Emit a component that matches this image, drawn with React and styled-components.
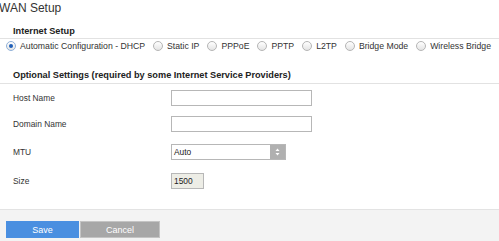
import React from "react";
import styled, { createGlobalStyle } from "styled-components";

const Global = createGlobalStyle`
  html, body {
    margin: 0;
    padding: 0;
    background: #fff;
  }
  body {
    font-family: "Liberation Sans", Arial, sans-serif;
    color: #333;
  }
`;

const Page = styled.div`
  width: 499px;
  height: 241px;
  display: flex;
  flex-direction: column;
  overflow: hidden;
`;

const Title = styled.h1`
  margin: 0 0 0 -1px;
  font-size: 12px;
  font-weight: normal;
  line-height: 17px;
  height: 16px;
  color: #333;
`;

const SectionHeader = styled.h2`
  margin: ${(p) => p.$top}px 0 0 0;
  padding: 0 0 ${(p) => p.$pad}px 13px;
  font-size: 9.2px;
  font-weight: bold;
  line-height: 12px;
  color: #222;
  border-bottom: 1px solid #e2e2e2;
`;

const RadioRow = styled.div`
  display: flex;
  align-items: center;
  height: 14px;
  padding-left: 6px;
  gap: 8px;
`;

const RadioItem = styled.label`
  display: flex;
  align-items: center;
  gap: 4px;
  font-size: 8.7px;
  white-space: nowrap;
  color: #333;
`;

const RadioDot = styled.span`
  box-sizing: border-box;
  width: 10px;
  height: 10px;
  border-radius: 50%;
  border: 1px solid ${(p) => (p.$on ? "#8fb0d8" : "#b5b5b5")};
  background: linear-gradient(#ffffff, #e4e4e4);
  display: flex;
  align-items: center;
  justify-content: center;

  &::after {
    content: "";
    width: 4px;
    height: 4px;
    border-radius: 50%;
    background: ${(p) => (p.$on ? "#1f5fb8" : "transparent")};
  }
`;

const Form = styled.div`
  display: flex;
  flex-direction: column;
  padding-left: 13px;
`;

const Row = styled.div`
  display: grid;
  grid-template-columns: 158px auto;
  align-items: center;
  height: 16px;
  margin-top: ${(p) => p.$top}px;
`;

const Label = styled.span`
  font-size: 8.4px;
  color: #333;
`;

const TextBox = styled.div`
  box-sizing: border-box;
  width: ${(p) => p.$w}px;
  height: 16px;
  border: 1px solid #b7b7b7;
  background: ${(p) => (p.$readonly ? "#ededE6" : "#fff")};
  font-size: 8.4px;
  line-height: 14px;
  padding-left: 2px;
  color: #222;
`;

const Select = styled.div`
  box-sizing: border-box;
  width: 115px;
  height: 16px;
  border: 1px solid #b7b7b7;
  display: flex;
  font-size: 8.4px;
  color: #222;
`;

const SelectValue = styled.span`
  flex: 1;
  line-height: 14px;
  padding-left: 2px;
`;

const Spinner = styled.span`
  width: 15px;
  background: #b0b0b0;
  display: flex;
  align-items: center;
  justify-content: center;
`;

const Footer = styled.div`
  margin-top: auto;
  height: 32px;
  border-top: 1px solid #e3e3e3;
  background: #f3f3f3;
  display: flex;
  align-items: flex-start;
  padding: 11px 0 0 6px;
  box-sizing: border-box;
  gap: 1px;
`;

const Button = styled.button`
  box-sizing: border-box;
  width: ${(p) => p.$w}px;
  height: 17px;
  margin: 0;
  padding: 0;
  font-family: "Liberation Sans", Arial, sans-serif;
  font-size: 9px;
  color: #fff;
  border: 1px solid ${(p) => (p.$primary ? "#4a90e2" : "#c4c4c4")};
  background: ${(p) => (p.$primary ? "#4a8fe0" : "#a7a7a7")};
  cursor: pointer;
`;

const modes = [
  "Automatic Configuration - DHCP",
  "Static IP",
  "PPPoE",
  "PPTP",
  "L2TP",
  "Bridge Mode",
  "Wireless Bridge",
];

export default function App() {
  return (
    <Page>
      <Global />
      <Title>WAN Setup</Title>
      <SectionHeader $top={9} $pad={1}>Internet Setup</SectionHeader>
      <RadioRow>
        {modes.map((m, i) => (
          <RadioItem key={m}>
            <RadioDot $on={i === 0} />
            {m}
          </RadioItem>
        ))}
      </RadioRow>
      <SectionHeader $top={16} $pad={2}>
        Optional Settings (required by some Internet Service Providers)
      </SectionHeader>
      <Form>
        <Row $top={6}>
          <Label>Host Name</Label>
          <TextBox $w={141} />
        </Row>
        <Row $top={10}>
          <Label>Domain Name</Label>
          <TextBox $w={141} />
        </Row>
        <Row $top={12}>
          <Label>MTU</Label>
          <Select>
            <SelectValue>Auto</SelectValue>
            <Spinner>
              <svg width="5" height="8" viewBox="0 0 5 8">
                <path d="M2.5 0.5 L4.5 3 L0.5 3 Z" fill="#fff" />
                <path d="M0.5 5 L4.5 5 L2.5 7.5 Z" fill="#fff" />
              </svg>
            </Spinner>
          </Select>
        </Row>
        <Row $top={13}>
          <Label>Size</Label>
          <TextBox $w={33} $readonly>1500</TextBox>
        </Row>
      </Form>
      <Footer>
        <Button $primary $w={73}>Save</Button>
        <Button $w={80}>Cancel</Button>
      </Footer>
    </Page>
  );
}
